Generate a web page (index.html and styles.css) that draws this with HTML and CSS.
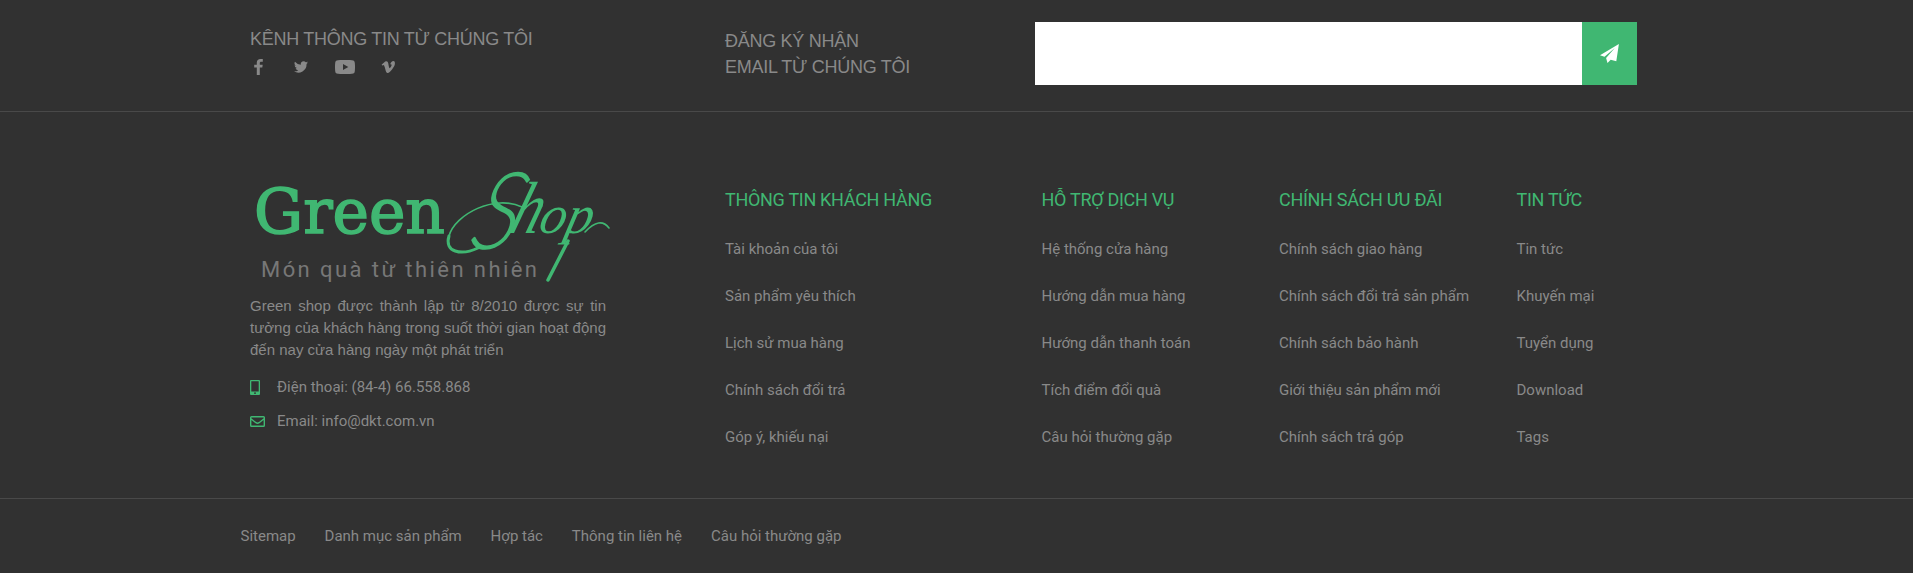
FILE: index.html
```html
<!DOCTYPE html>
<html lang="vi">
<head>
<meta charset="utf-8">
<title>Green Shop</title>
<link rel="stylesheet" href="styles.css">
</head>
<body>
<footer class="footer">
  <section class="top">
    <div class="channel">
      <h4 class="top-title">KÊNH THÔNG TIN TỪ CHÚNG TÔI</h4>
      <div class="social">
        <svg class="ico-fb" viewBox="0 0 9 16"><path d="M8.8.1v2.6H7.3c-1.200 0-1.500.6-1.500 1.400v1.700h2.900l-.4 2.800H5.800V16H2.800V8.600H.2V5.800h2.600V3.600C2.800 1.200 4.300 0 6.500 0z"/></svg>
        <svg class="ico-tw" viewBox="0 0 24 20"><path d="M24 2.400a10 10 0 0 1-2.800.8A5 5 0 0 0 23.300.5a10 10 0 0 1-3.100 1.200 4.900 4.900 0 0 0-8.400 4.500A14 14 0 0 1 1.700 1a4.900 4.900 0 0 0 1.500 6.600 4.900 4.900 0 0 1-2.200-.6 4.900 4.900 0 0 0 3.900 4.900 5 5 0 0 1-2.200.1 4.900 4.900 0 0 0 4.600 3.400A9.900 9.900 0 0 1 0 17.400 14 14 0 0 0 21.500 4.900 10 10 0 0 0 24 2.400z"/></svg>
        <svg class="ico-yt" viewBox="0 0 20 14"><path fill-rule="evenodd" d="M3 .2C7 -.1 13-.1 17 .2c2 .2 2.700 1 2.800 2.800.3 3 .3 5 0 8-.1 1.800-.8 2.600-2.800 2.800-4 .3-10 .3-14 0C1 13.600.3 12.800.2 11c-.3-3-.3-5 0-8C.3 1.200 1 .4 3 .2zM8 4v5.900L13.300 7z"/></svg>
        <svg class="ico-vm" viewBox="0 0 14 12"><path d="M13.900 2.700c-.1 1.400-1 3.200-2.700 5.500C9.400 10.600 7.900 11.900 6.700 12c-.8 0-1.400-.7-1.900-2.100L3.700 6c-.4-1.400-.8-2.100-1.200-2.100-.1 0-.5.200-1.200.7L.6 3.700C2.400 2.100 4 .3 5.100.2c1.200-.1 1.900.7 2.200 2.400.4 2.600.8 4.600 1.400 4.600.4 0 1.900-2.200 1.900-3.200 0-.8-.6-.9-1.400-.6C9.700 1.200 10.900.1 12.500 0c1.100 0 1.500.9 1.400 2.700z"/></svg>
      </div>
    </div>
    <h4 class="top-title signup-title">ĐĂNG KÝ NHẬN<br>EMAIL TỪ CHÚNG TÔI</h4>
    <form class="signup">
      <input class="email" type="email" aria-label="Email">
      <button class="send" type="button" aria-label="Gửi">
        <svg class="ico-send" viewBox="0 0 19 19"><path d="M18.900.1 16.300 17.200 10.700 15.800 7.500 19 6.100 14 14.800 4.100 4.500 12.700 0 11.200z"/></svg>
      </button>
    </form>
  </section>

  <section class="main">
    <div class="about">
      <svg class="logo" viewBox="0 0 360 118" role="img" aria-label="Green Shop">
        <text class="logo-green" x="4" y="65" textLength="191" lengthAdjust="spacingAndGlyphs">Green</text>
        <g class="logo-swash">
          <path class="logo-thin" d="M272 39C245 26 205 46 199 68"/>
          <path d="M199 68C194 84 211 88 228 80"/>
          <path class="logo-thin" d="M335 64Q350 48 359 60"/>
        </g>
        <text class="logo-s" transform="translate(217 81) skewX(-16)" textLength="46" lengthAdjust="spacingAndGlyphs">S</text>
        <text class="logo-h" transform="translate(257 65) skewX(-18)" textLength="30" lengthAdjust="spacingAndGlyphs">h</text>
        <text class="logo-op" transform="translate(287 65) skewX(-14)" textLength="53" lengthAdjust="spacingAndGlyphs">op</text>
        <path class="logo-tail" d="M318 73L298 112"/>
        <text class="logo-tagline" x="11" y="109" textLength="276">Món quà từ thiên nhiên</text>
      </svg>
      <p class="intro">Green shop được thành lập từ 8/2010 được sự tin tưởng của khách hàng trong suốt thời gian hoạt động đến nay cửa hàng ngày một phát triển</p>
      <div class="contact">
        <svg class="ico-phone" viewBox="0 0 10 15"><path fill-rule="evenodd" d="M1 0h8q1 0 1 1v13q0 1-1 1H1q-1 0-1-1V1Q0 0 1 0zM1.300 1.300v10.200h7.400V1.300zM4 12.400v1.400h2v-1.400z"/></svg>
        <span>Điện thoại: (84-4) 66.558.868</span>
      </div>
      <div class="contact">
        <svg class="ico-mail" viewBox="0 0 15 11"><path d="M1.500.7h12q.8 0 .8.800v8q0 .8-.8.800h-12q-.8 0-.8-.8v-8q0-.8.8-.8zM.9 2.800 5.900 6.700q1.600 1.100 3.200 0L14.100 2.800"/></svg>
        <span>Email: info@dkt.com.vn</span>
      </div>
    </div>
    <nav class="links">
      <h4 class="links-title">THÔNG TIN KHÁCH HÀNG</h4>
      <a>Tài khoản của tôi</a><a>Sản phẩm yêu thích</a><a>Lịch sử mua hàng</a><a>Chính sách đổi trả</a><a>Góp ý, khiếu nại</a>
    </nav>
    <nav class="links">
      <h4 class="links-title">HỖ TRỢ DỊCH VỤ</h4>
      <a>Hệ thống cửa hàng</a><a>Hướng dẫn mua hàng</a><a>Hướng dẫn thanh toán</a><a>Tích điểm đổi quà</a><a>Câu hỏi thường gặp</a>
    </nav>
    <nav class="links">
      <h4 class="links-title">CHÍNH SÁCH ƯU ĐÃI</h4>
      <a>Chính sách giao hàng</a><a>Chính sách đổi trả sản phẩm</a><a>Chính sách bảo hành</a><a>Giới thiệu sản phẩm mới</a><a>Chính sách trả góp</a>
    </nav>
    <nav class="links">
      <h4 class="links-title">TIN TỨC</h4>
      <a>Tin tức</a><a>Khuyến mại</a><a>Tuyển dụng</a><a>Download</a><a>Tags</a>
    </nav>
  </section>

  <nav class="bottom">
    <a>Sitemap</a><a>Danh mục sản phẩm</a><a>Hợp tác</a><a>Thông tin liên hệ</a><a>Câu hỏi thường gặp</a>
  </nav>
</footer>
</body>
</html>
```
FILE: styles.css
```css
* { box-sizing: border-box; }
body { margin: 0; background: #313131; }
h4, p { margin: 0; font-weight: 400; }
.footer {
  height: 573px;
  overflow: hidden;
  background: #313131;
  color: #898989;
  font: 15px/20px Roboto, sans-serif;
}
.top {
  display: grid;
  grid-template-columns: 475px 310px 602px;
  align-items: start;
  height: 112px;
  padding: 22px 0 0 250px;
  border-bottom: 1px solid #494949;
}
.top-title { font: 18px/26px "Liberation Sans", Arial, sans-serif; letter-spacing: -0.28px; }
.channel { padding-top: 4px; }
.signup-title { padding-top: 6px; }
.social { display: flex; align-items: center; height: 30px; fill: #898989; }
.ico-fb { width: 9px; height: 16px; margin-left: 4px; }
.ico-tw { width: 14px; height: 12px; margin-left: 31px; }
.ico-yt { width: 20px; height: 14px; margin-left: 27px; }
.ico-vm { width: 14px; height: 12px; margin-left: 26px; }
.signup { display: flex; height: 63px; }
.email { width: 547px; border: 0; padding: 0 20px; background: #fff; }
.send {
  display: flex;
  align-items: center;
  justify-content: center;
  width: 55px;
  border: 0;
  padding: 0;
  background: #40b772;
}
.ico-send { width: 19px; height: 19px; fill: #fff; }
.main {
  display: grid;
  grid-template-columns: 475px 316.5px 237.5px 237.5px 150px;
  height: 387px;
  padding: 52px 0 0 250px;
  border-bottom: 1px solid #494949;
}
.about { width: 356px; }
.logo { display: block; width: 360px; height: 118px; margin-top: 4px; overflow: visible; }
.logo-green { font: 62px "DejaVu Serif", serif; fill: #40b772; stroke: #40b772; stroke-width: 1.6; }
.logo-s, .logo-h, .logo-op { fill: #40b772; font-style: italic; }
.logo-s { font-family: Lato, sans-serif; font-weight: 300; font-size: 108px; }
.logo-h { font-family: "Liberation Serif", serif; font-size: 74px; }
.logo-op { font-family: "Liberation Serif", serif; font-size: 54px; }
.logo-swash, .logo-tail { fill: none; stroke: #40b772; stroke-width: 3; stroke-linecap: round; }
.logo-swash .logo-thin { stroke-width: 1.6; }
.logo-tail { stroke-width: 3.5; }
.logo-tagline { font: 22px Roboto, sans-serif; fill: #777; }
.intro { margin-top: 9px; font: 15px/22px "Liberation Sans", Arial, sans-serif; text-align: justify; }
.contact { display: flex; align-items: center; height: 34px; }
.intro + .contact { margin-top: 9px; }
.ico-phone { width: 10px; height: 15px; margin-right: 17px; fill: #40b772; }
.ico-mail { width: 15px; height: 11px; margin-right: 12px; fill: none; stroke: #40b772; stroke-width: 1.4; }
.links { display: flex; flex-direction: column; padding-top: 23px; }
.links-title { height: 39px; color: #40b772; font-size: 18px; line-height: 26px; letter-spacing: -0.3px; white-space: nowrap; }
.links a { height: 47px; line-height: 47px; white-space: nowrap; }
.bottom { display: flex; gap: 28.9px; padding: 27px 0 0 240.5px; }
```
